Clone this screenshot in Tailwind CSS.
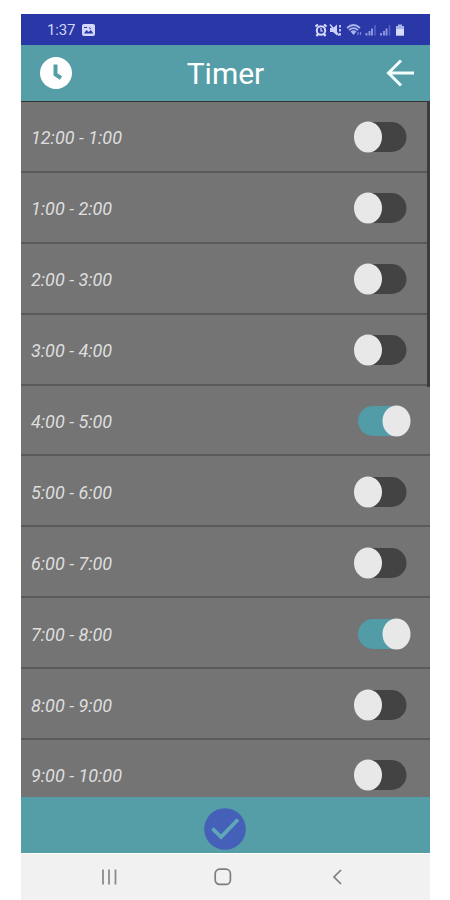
<!DOCTYPE html>
<html lang="en">
<head>
<meta charset="utf-8">
<title>Timer</title>
<script src="https://cdn.jsdelivr.net/npm/@tailwindcss/browser@4"></script>
</head>
<body class="bg-white font-['Roboto',sans-serif]">
<div class="w-[450px] h-[900px] overflow-hidden pt-[14px] pl-[21px]">
  <main class="w-[409px] h-[886px] flex flex-col">
    <header class="h-[31px] shrink-0 bg-[#2a37a6] flex items-center pl-[26px] pr-[24px] text-[#cfd4fa]">
      <span class="text-[15px] leading-none w-[35px] tracking-[-0.2px] pt-px">1:37</span>
      <svg width="13" height="12" viewBox="0 0 13 12"><rect width="13" height="12" rx="2" fill="#d3d8fb"/><path d="M2 9.500 4.500 6l2 2 2.500-2 2.300 3.500z" fill="#2a37a6"/><path d="M2 3.500h3M7 3.500l2 1.500" stroke="#2a37a6" stroke-width="1"/></svg>
      <svg class="ml-auto" width="92" height="16" viewBox="0 0 92 16" fill="none">
        <circle cx="7" cy="8.500" r="4.200" stroke="#d8dcfb" stroke-width="2"/><path d="M7 6v3h2" stroke="#d8dcfb" stroke-width="1.200"/><path d="M1.500 4.500 4 2.500M12.500 4.500 10 2.500M2.500 14l1.500-2M11.500 14 10 12" stroke="#d8dcfb" stroke-width="2.200"/>
        <path d="M16 6h3l4-3.500v11L19 10h-3z" fill="#cdd2f8"/><path d="M16 2.500 25 13.500" stroke="#cdd2f8" stroke-width="1.500"/><path d="M26 3v2.500M26 7v2.500M26 11v2.500" stroke="#cdd2f8" stroke-width="1.800"/>
        <path d="M33 6Q39.500 0 46 6M35 8.200Q39.500 4 44 8.200" stroke="#a9b3ec" stroke-width="1.800"/><path d="M36.500 9.500Q39.500 7 42.500 9.500L39.500 13z" fill="#a9b3ec"/><path d="M44 10v3M46.500 10v3" stroke="#7a86d4" stroke-width="1.200"/>
        <path d="M52.500 11v2.500M55.500 9v4.500M58 6.500v7" stroke="#8f9ae0" stroke-width="1.900"/><path d="M61 3v10.500" stroke="#5360c2" stroke-width="1.700"/>
        <path d="M67 11v2.500M70 9v4.500M72.500 6.500v7" stroke="#8f9ae0" stroke-width="1.900"/><path d="M75.500 3v10.500" stroke="#5360c2" stroke-width="1.700"/>
        <path d="M82 4h2V2.500h4V4h2v9.500h-8z" fill="#a9b3ec"/><path d="M82 7h8v6.500h-8z" fill="#d8dcfb"/>
      </svg>
    </header>
    <div class="h-[56px] shrink-0 bg-[#559da7] flex items-center justify-between pl-[19px] pr-[15px]">
      <svg width="32" height="32" viewBox="0 0 32 32"><circle cx="16" cy="16" r="16" fill="#fff"/><path d="M15.500 7.500v10l5.500 3.500" fill="none" stroke="#559da7" stroke-width="4"/></svg>
      <h1 class="text-[30px] leading-none text-white mr-[7px] pt-[2px]">Timer</h1>
      <svg width="29" height="28" viewBox="0 0 29 28" fill="none" stroke="#f2fffd" stroke-width="3"><path d="M15 1.500 2.500 14 15 26.500M2.500 14H28"/></svg>
    </div>
    <section class="relative h-[696px] shrink-0 overflow-hidden bg-[#747474] border-t border-[#333]">
      <div id="rows"></div>
      <div class="absolute right-0 top-0 w-[3px] h-[285px] bg-[#3c3c3c]"></div>
    </section>
    <footer class="h-[56px] shrink-0 bg-[#559da7] flex items-center justify-center pt-[8px] pr-[2px]">
      <svg width="42" height="42" viewBox="0 0 42 42"><circle cx="21" cy="21" r="20.800" fill="#4460b8"/><path d="M8.500 20.500 17 29 34 11.500" fill="none" stroke="#60a7b8" stroke-width="3.800"/></svg>
    </footer>
    <nav class="h-[47px] shrink-0 bg-[#f1f1f1] flex items-center pl-[80px] border-t border-white">
      <svg width="17" height="16" viewBox="0 0 17 16" stroke="#8b8b8b" stroke-width="1.800"><path d="M2 .5v15M8 .5v15M14.500 .5v15"/></svg>
      <svg class="ml-[96px]" width="18" height="18" viewBox="0 0 18 18"><rect x="1.200" y="1.200" width="15.200" height="15.200" rx="4.500" fill="none" stroke="#7d7d7d" stroke-width="1.700"/></svg>
      <svg class="ml-[100px]" width="10" height="16" viewBox="0 0 10 16"><path d="M9 1 2 8l7 7" fill="none" stroke="#7d7d7d" stroke-width="1.700"/></svg>
    </nav>
  </main>
</div>
<script>
const slots = ['12:00 - 1:00','1:00 - 2:00','2:00 - 3:00','3:00 - 4:00','4:00 - 5:00','5:00 - 6:00','6:00 - 7:00','7:00 - 8:00','8:00 - 9:00','9:00 - 10:00'];
const active = [4, 7];
const off = '<svg width="58" height="32" viewBox="0 0 58 32"><rect x="5" y="1" width="48.500" height="30" rx="15" fill="#434343"/><ellipse cx="15" cy="16" rx="14" ry="15.500" fill="#e8e8e8"/></svg>';
const on = '<svg width="58" height="32" viewBox="0 0 58 32"><rect x="5" y="1" width="48" height="30" rx="15" fill="#529ca7"/><ellipse cx="43.500" cy="16" rx="14" ry="15.500" fill="#e8e8e8"/></svg>';
document.getElementById('rows').innerHTML = slots.map((s, i) =>
  `<div class="h-[70.9px] flex items-center justify-between pt-[2px] pl-[10px] pr-[19px] border-b-2 border-[#5a5a5a]"><span class="italic text-[18px] leading-none text-[#dedede] pt-[2px]">${s}</span>${active.includes(i) ? on : off}</div>`).join('');
</script>
</body>
</html>
